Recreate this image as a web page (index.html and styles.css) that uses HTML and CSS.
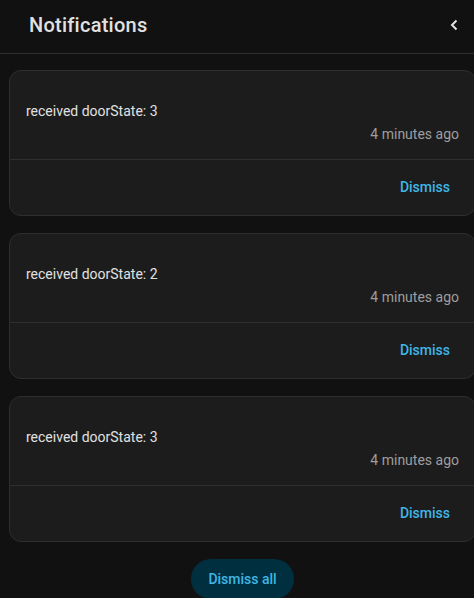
FILE: index.html
```html
<!DOCTYPE html>
<html>
<head>
<meta charset="UTF-8">
<title>Notifications</title>
<link rel="stylesheet" href="styles.css">
</head>
<body>
<div class="header">
  <div class="title">Notifications</div>
  <svg class="back" width="8" height="12" viewBox="0 0 8 12">
    <path d="M6.5 1.5 L2 6 L6.5 10.5" fill="none" stroke="#e1e1e1" stroke-width="2"/>
  </svg>
</div>
<div class="list">
  <div class="card">
    <div class="content">
      <div class="message">received doorState: 3</div>
      <div class="time">4 minutes ago</div>
    </div>
    <div class="actions"><button class="dismiss">Dismiss</button></div>
  </div>
  <div class="card">
    <div class="content">
      <div class="message">received doorState: 2</div>
      <div class="time">4 minutes ago</div>
    </div>
    <div class="actions"><button class="dismiss">Dismiss</button></div>
  </div>
  <div class="card">
    <div class="content">
      <div class="message">received doorState: 3</div>
      <div class="time">4 minutes ago</div>
    </div>
    <div class="actions"><button class="dismiss">Dismiss</button></div>
  </div>
  <div class="footer"><button class="dismiss-all">Dismiss all</button></div>
</div>
</body>
</html>
```

FILE: styles.css
```css
html, body {
  margin: 0;
  height: 100%;
  overflow: hidden;
}
body {
  background-color: #111111;
  font-family: Roboto, "Liberation Sans", sans-serif;
  color: #e1e1e1;
}
.header {
  display: flex;
  align-items: center;
  justify-content: space-between;
  height: 53px;
  padding: 0 16px 0 29px;
  border-bottom: 1px solid #2f2f2f;
}
.title {
  font-size: 20px;
  font-weight: 500;
  letter-spacing: 0.25px;
  margin-top: -4px;
}
.back {
  margin-top: -4px;
}
.list {
  padding: 16px 0 0 9px;
}
.card {
  width: 465px;
  margin-bottom: 17px;
  background-color: #1c1c1c;
  border: 1px solid #2e2e2e;
  border-radius: 12px;
}
.content {
  padding: 30px 16px 15px 16px;
  border-bottom: 1px solid #2e2e2e;
}
.message {
  font-size: 14px;
  line-height: 20px;
}
.time {
  margin-top: 3px;
  font-size: 14px;
  line-height: 20px;
  color: #9e9e9e;
  text-align: right;
}
.actions {
  display: flex;
  justify-content: flex-end;
  padding: 9px 17px 10px;
}
.dismiss {
  height: 36px;
  padding: 0 8px;
  border: none;
  background: none;
  font-family: Roboto, "Liberation Sans", sans-serif;
  font-size: 14px;
  font-weight: 500;
  color: #3fb6e6;
}
.footer {
  display: flex;
  justify-content: center;
  width: 467px;
}
.dismiss-all {
  height: 40px;
  padding: 0 17px;
  border: none;
  border-radius: 20px;
  background-color: #00303f;
  font-family: Roboto, "Liberation Sans", sans-serif;
  font-size: 14px;
  font-weight: 500;
  color: #3fb6e6;
}
```
